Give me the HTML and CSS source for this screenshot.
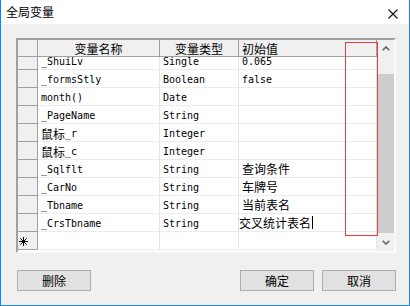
FILE: index.html
```
<!DOCTYPE html>
<html lang="zh-CN">
<head>
    <meta charset="UTF-8">
    <title>全局变量</title>
    <link rel="stylesheet" href="styles.css">
</head>
<body>
<div class="window">
    <div class="titlebar">
        <span class="title">全局变量</span>
        <svg class="close" width="10" height="10" viewBox="0 0 10 10">
            <path d="M0.5 0.5L9.5 9.5M9.5 0.5L0.5 9.5" stroke="#111" stroke-width="1.1" fill="none"/>
        </svg>
    </div>

    <div class="client">
        <div class="grid">
            <div class="table">
                <div class="row head">
                    <div class="cell rh"></div>
                    <div class="cell center">变量名称</div>
                    <div class="cell center">变量类型</div>
                    <div class="cell">初始值</div>
                </div>
                <div class="rows">
                    <div class="row first">
                        <div class="cell rh"></div>
                        <div class="cell">_ShuiLv</div>
                        <div class="cell">Single</div>
                        <div class="cell">0.065</div>
                    </div>
                    <div class="row">
                        <div class="cell rh"></div>
                        <div class="cell">_formsStly</div>
                        <div class="cell">Boolean</div>
                        <div class="cell">false</div>
                    </div>
                    <div class="row">
                        <div class="cell rh"></div>
                        <div class="cell">month()</div>
                        <div class="cell">Date</div>
                        <div class="cell"></div>
                    </div>
                    <div class="row">
                        <div class="cell rh"></div>
                        <div class="cell">_PageName</div>
                        <div class="cell">String</div>
                        <div class="cell"></div>
                    </div>
                    <div class="row">
                        <div class="cell rh"></div>
                        <div class="cell"><span class="zh">鼠标</span>_r</div>
                        <div class="cell">Integer</div>
                        <div class="cell"></div>
                    </div>
                    <div class="row">
                        <div class="cell rh"></div>
                        <div class="cell"><span class="zh">鼠标</span>_c</div>
                        <div class="cell">Integer</div>
                        <div class="cell"></div>
                    </div>
                    <div class="row">
                        <div class="cell rh"></div>
                        <div class="cell">_Sqlflt</div>
                        <div class="cell">String</div>
                        <div class="cell zh">查询条件</div>
                    </div>
                    <div class="row">
                        <div class="cell rh"></div>
                        <div class="cell">_CarNo</div>
                        <div class="cell">String</div>
                        <div class="cell zh">车牌号</div>
                    </div>
                    <div class="row">
                        <div class="cell rh"></div>
                        <div class="cell">_Tbname</div>
                        <div class="cell">String</div>
                        <div class="cell zh">当前表名</div>
                    </div>
                    <div class="row">
                        <div class="cell rh"></div>
                        <div class="cell">_CrsTbname</div>
                        <div class="cell">String</div>
                        <div class="cell zh editing">交叉统计表名<span class="caret"></span></div>
                    </div>
                    <div class="row">
                        <div class="cell rh">
                            <svg width="9" height="9" viewBox="0 0 9 9">
                                <path d="M4.5 0V9M0 4.5H9M1.3 1.3L7.7 7.7M7.7 1.3L1.3 7.7" stroke="#000" stroke-width="1" fill="none"/>
                            </svg>
                        </div>
                        <div class="cell"></div>
                        <div class="cell"></div>
                        <div class="cell"></div>
                    </div>
                </div>
            </div>

            <div class="scrollbar">
                <div class="sb-btn">
                    <svg width="8" height="5" viewBox="0 0 8 5"><path d="M0.7 4.3L4 1L7.3 4.3" stroke="#606060" stroke-width="1.6" fill="none"/></svg>
                </div>
                <div class="sb-track"><div class="sb-thumb"></div></div>
                <div class="sb-btn">
                    <svg width="8" height="5" viewBox="0 0 8 5"><path d="M0.7 0.7L4 4L7.3 0.7" stroke="#606060" stroke-width="1.6" fill="none"/></svg>
                </div>
            </div>

            <!-- red annotation frame -->
            <div class="mark"></div>
        </div>

        <div class="footer">
            <button class="btn">删除</button>
            <div class="btn-group">
                <button class="btn">确定</button>
                <button class="btn">取消</button>
            </div>
        </div>
    </div>
</div>
</body>
</html>
```

FILE: styles.css
```
* {
    box-sizing: border-box;
}
body {
    margin: 0;
    font-family: "Noto Sans CJK SC", sans-serif;
    font-size: 12px;
    color: #000;
}
.window {
    width: 410px;
    height: 306px;
    border: 1px solid #1883d7;
    border-top: none;
    background: #f0f0f0;
}
.titlebar {
    height: 24px;
    background: #fff;
    display: flex;
    align-items: center;
    justify-content: space-between;
    padding: 0 11px 0 5px;
}
.title {
    font-size: 12px;
    line-height: 24px;
}
.close {
    display: block;
    margin-top: 3px;
}
.client {
    padding: 14px 0 0 15px;
}
.grid {
    position: relative;
    display: flex;
    width: 380px;
    height: 215px;
    border: 2px solid;
    border-color: #a0a0a0 #fafafa #fafafa #a0a0a0;
    background: #fff;
}
.table {
    width: 359px;
    display: flex;
    flex-direction: column;
}
.row {
    display: grid;
    grid-template-columns: 20px 122px 79px 138px;
    height: 18px;
    flex-shrink: 0;
}
.rows {
    height: 194px;
    overflow: hidden;
}
.row.first {
    margin-top: -5px;
}
.cell {
    display: flex;
    align-items: center;
    padding: 1px 0 0 3px;
    white-space: nowrap;
    overflow: hidden;
    border-right: 1px solid #e6e6e6;
    border-bottom: 1px solid #ececec;
    font-family: "DejaVu Sans Mono", "Noto Sans CJK SC", monospace;
    font-size: 10px;
}
.cell.zh, .zh {
    font-family: "Noto Sans CJK SC", sans-serif;
    font-size: 12px;
}
.cell.zh {
    padding-top: 0;
}
.cell.editing {
    padding-left: 0;
}
.caret {
    display: inline-block;
    width: 1px;
    height: 13px;
    background: #000;
    margin-left: 1px;
}
.cell.rh {
    background: #f0f0f0;
    border-right-color: #a0a0a0;
    border-bottom-color: #a0a0a0;
    padding-left: 1px;
}
.head {
    height: 17px;
}
.head .cell {
    background: #f0f0f0;
    border-right-color: #a0a0a0;
    border-bottom-color: #a0a0a0;
    padding-top: 0;
    font-family: "Noto Sans CJK SC", sans-serif;
    font-size: 12px;
}
.head .cell.center {
    justify-content: center;
    padding-left: 0;
}
.scrollbar {
    width: 17px;
    background: #f0f0f0;
    display: flex;
    flex-direction: column;
}
.sb-btn {
    height: 17px;
    display: flex;
    align-items: center;
    justify-content: center;
}
.sb-track {
    flex: 1;
    padding-top: 17px;
}
.sb-thumb {
    height: 159px;
    margin-left: 1px;
    background: #cdcdcd;
}
.mark {
    position: absolute;
    left: 327px;
    top: 2px;
    width: 33px;
    height: 194px;
    border: 1px solid #ec3b3b;
}
.footer {
    display: flex;
    justify-content: space-between;
    width: 379px;
    margin: 17px 0 0 1px;
}
.btn-group {
    display: flex;
    gap: 8px;
}
.btn {
    width: 74px;
    height: 21px;
    padding: 0;
    background: #e1e1e1;
    border: 1px solid #adadad;
    font-family: "Noto Sans CJK SC", sans-serif;
    font-size: 12px;
    line-height: 19px;
    color: #000;
}
```
